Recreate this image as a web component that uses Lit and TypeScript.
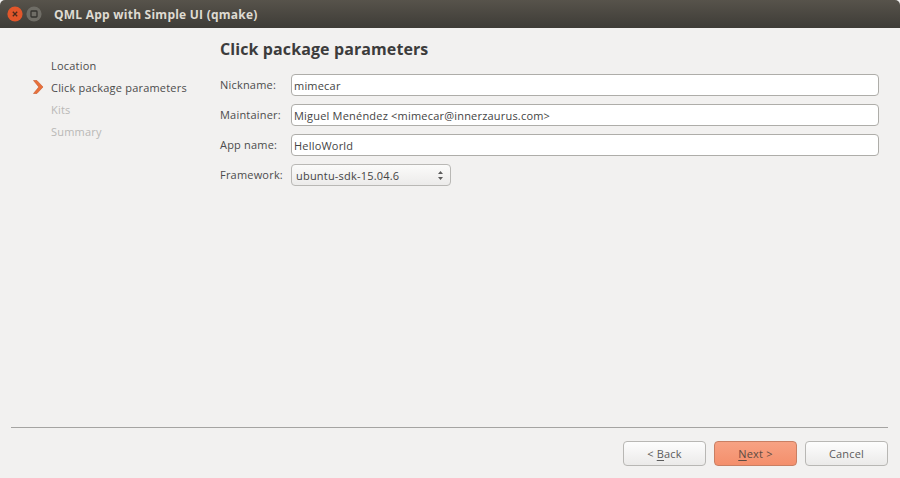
import { LitElement, css, html } from "lit";
import { customElement } from "lit/decorators.js";

const STEPS = [
  { label: "Location", state: "done" },
  { label: "Click package parameters", state: "current" },
  { label: "Kits", state: "todo" },
  { label: "Summary", state: "todo" },
];

const FIELDS = [
  { label: "Nickname:", value: "mimecar" },
  { label: "Maintainer:", value: "Miguel Menéndez <mimecar@innerzaurus.com>" },
  { label: "App name:", value: "HelloWorld" },
];

@customElement("app-root")
export class AppRoot extends LitElement {
  static styles = css`
    :host {
      display: flex;
      flex-direction: column;
      width: 900px;
      height: 478px;
      overflow: hidden;
      background: #f2f1f0;
      color: #4c4c4c;
      font-family: "Open Sans", "Noto Sans", sans-serif;
      font-size: 11px;
      letter-spacing: 0.2px;
    }
    .titlebar {
      display: flex;
      align-items: center;
      flex: none;
      height: 28px;
      box-sizing: border-box;
      padding-left: 7px;
      background: linear-gradient(#57534b, #3e3c37);
      border-radius: 5px 5px 0 0;
    }
    .win-btn {
      display: block;
      width: 16px;
      height: 16px;
      margin-right: 3px;
    }
    .title {
      margin-left: 9px;
      color: #dfdbd2;
      font-size: 12px;
      font-weight: 700;
      letter-spacing: 0.24px;
      white-space: nowrap;
    }
    .main {
      display: flex;
      flex: 1;
      min-height: 0;
    }
    .steps {
      flex: none;
      width: 220px;
      box-sizing: border-box;
      padding: 26px 0 0 33px;
    }
    .step {
      display: flex;
      align-items: center;
      height: 22px;
      white-space: nowrap;
    }
    .step.todo {
      color: #b9b8b6;
    }
    .marker {
      flex: none;
      width: 18px;
      height: 22px;
    }
    .marker svg {
      display: block;
    }
    .page {
      flex: 1;
      padding: 10px 21px 0 0;
    }
    h1 {
      margin: 0 0 14px;
      color: #3c3c3c;
      font-size: 16px;
      font-weight: 700;
      letter-spacing: 0.1px;
      line-height: 22px;
    }
    .form {
      display: grid;
      grid-template-columns: 71px 1fr;
      row-gap: 8px;
      align-items: center;
    }
    .label {
      padding-bottom: 2px;
    }
    .field {
      box-sizing: border-box;
      height: 22px;
      padding: 0 2px;
      line-height: 21px;
      background: #fff;
      border: 1px solid #aeada9;
      border-radius: 4px;
      color: #444;
      white-space: nowrap;
    }
    .combo {
      display: flex;
      align-items: center;
      justify-content: space-between;
      width: 160px;
      height: 22px;
      box-sizing: border-box;
      padding: 0 6px 0 4px;
      background: linear-gradient(#fbfbfa, #ecebea);
      border: 1px solid #b9b8b5;
      border-radius: 4px;
      color: #444;
    }
    .footer {
      flex: none;
      padding: 0 12px 12px 11px;
    }
    .rule {
      height: 1px;
      background: #a5a4a2;
      margin-bottom: 13px;
    }
    .buttons {
      display: flex;
      justify-content: flex-end;
      gap: 8px;
    }
    .btn {
      box-sizing: border-box;
      width: 83px;
      height: 25px;
      line-height: 23px;
      text-align: center;
      background: linear-gradient(#fdfdfd, #ebeae9);
      border: 1px solid #b8b7b4;
      border-radius: 4px;
      color: #5c5c5c;
    }
    .btn.primary {
      background: linear-gradient(#f7a283, #f48f6c);
      border-color: #c97f63;
      color: #5d4b42;
    }
    u {
      text-underline-offset: 2px;
    }
  `;

  render() {
    return html`
      <div class="titlebar">
        <svg class="win-btn" viewBox="0 0 16 16">
          <circle cx="8" cy="8" r="7.6" fill="#e2562a" />
          <path d="M5.8 5.8l4.4 4.4M10.2 5.8l-4.4 4.4" stroke="#4a2a1c" stroke-width="1.3" />
        </svg>
        <svg class="win-btn" viewBox="0 0 16 16">
          <circle cx="8" cy="8" r="7.6" fill="#6f6d66" />
          <rect x="5" y="5" width="6" height="6" rx=".8" fill="none" stroke="#33322e" stroke-width="1.3" />
        </svg>
        <span class="title">QML App with Simple UI (qmake)</span>
      </div>
      <div class="main">
        <div class="steps">
          ${STEPS.map(
            (s) => html`
              <div class="step ${s.state}">
                <span class="marker">
                  ${s.state === "current"
                    ? html`<svg width="12" height="22" viewBox="0 0 12 22">
                        <path
                          d="M0.5 4.5h3.4L10 11l-6.1 6.5H0.5L5.8 11z"
                          fill="#e8703a"
                          stroke="#c9582a"
                          stroke-width=".6"
                        />
                      </svg>`
                    : ""}
                </span>
                ${s.label}
              </div>
            `,
          )}
        </div>
        <div class="page">
          <h1>Click package parameters</h1>
          <div class="form">
            ${FIELDS.map(
              (f) => html`
                <span class="label">${f.label}</span>
                <div class="field">${f.value}</div>
              `,
            )}
            <span class="label">Framework:</span>
            <div class="combo">
              ubuntu-sdk-15.04.6
              <svg width="7" height="11" viewBox="0 0 7 11">
                <path d="M3.5 1L6 4H1zM3.5 10L1 7h5z" fill="#5c5c5c" />
              </svg>
            </div>
          </div>
        </div>
      </div>
      <div class="footer">
        <div class="rule"></div>
        <div class="buttons">
          <div class="btn">&lt; <u>B</u>ack</div>
          <div class="btn primary"><u>N</u>ext &gt;</div>
          <div class="btn">Cancel</div>
        </div>
      </div>
    `;
  }
}
